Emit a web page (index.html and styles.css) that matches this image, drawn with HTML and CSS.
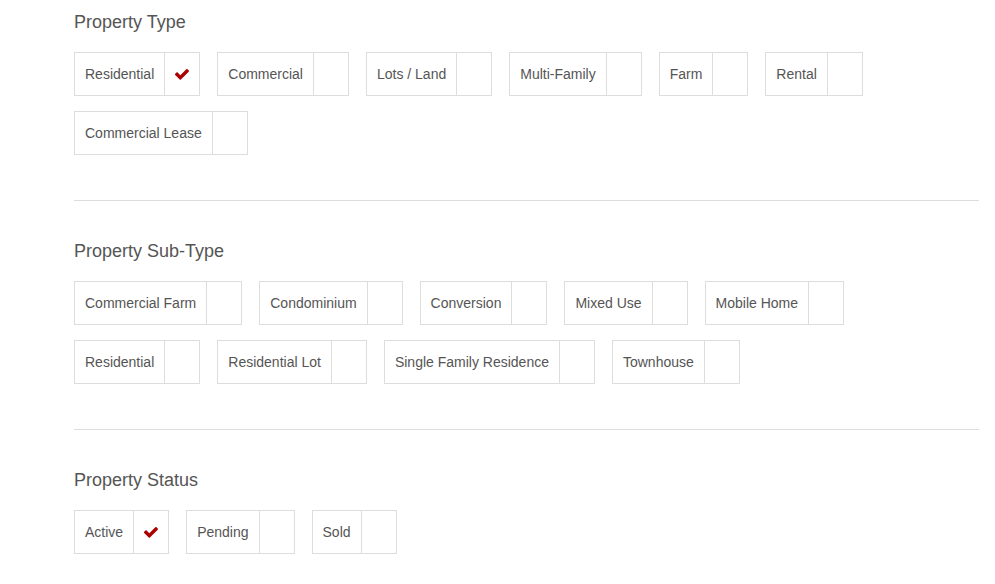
FILE: index.html
```html
<!DOCTYPE html>
<html>
<head>
    <title>Property Search</title>
    <link rel="stylesheet" href="styles.css">
</head>
<body>
    <div class="container">
        <div class="filter-group">
            <h3>Property Type</h3>
            <div class="options">
                <label class="option checked"><span class="option-text">Residential</span><span class="option-box"><svg viewBox="128 370 1543 1152"><path d="M1671 566q0 40-28 68l-724 724-136 136q-28 28-68 28t-68-28l-136-136-362-362q-28-28-28-68t28-68l136-136q28-28 68-28t68 28l294 295 656-657q28-28 68-28t68 28l136 136q28 28 28 68z"/></svg></span></label>
                <label class="option"><span class="option-text">Commercial</span><span class="option-box"></span></label>
                <label class="option"><span class="option-text">Lots / Land</span><span class="option-box"></span></label>
                <label class="option"><span class="option-text">Multi-Family</span><span class="option-box"></span></label>
                <label class="option"><span class="option-text">Farm</span><span class="option-box"></span></label>
                <label class="option"><span class="option-text">Rental</span><span class="option-box"></span></label>
                <label class="option"><span class="option-text">Commercial Lease</span><span class="option-box"></span></label>
            </div>
        </div>

        <hr>

        <div class="filter-group">
            <h3>Property Sub-Type</h3>
            <div class="options">
                <label class="option"><span class="option-text">Commercial Farm</span><span class="option-box"></span></label>
                <label class="option"><span class="option-text">Condominium</span><span class="option-box"></span></label>
                <label class="option"><span class="option-text">Conversion</span><span class="option-box"></span></label>
                <label class="option"><span class="option-text">Mixed Use</span><span class="option-box"></span></label>
                <label class="option"><span class="option-text">Mobile Home</span><span class="option-box"></span></label>
                <label class="option"><span class="option-text">Residential</span><span class="option-box"></span></label>
                <label class="option"><span class="option-text">Residential Lot</span><span class="option-box"></span></label>
                <label class="option"><span class="option-text">Single Family Residence</span><span class="option-box"></span></label>
                <label class="option"><span class="option-text">Townhouse</span><span class="option-box"></span></label>
            </div>
        </div>

        <hr>

        <div class="filter-group">
            <h3>Property Status</h3>
            <div class="options">
                <label class="option checked"><span class="option-text">Active</span><span class="option-box"><svg viewBox="128 370 1543 1152"><path d="M1671 566q0 40-28 68l-724 724-136 136q-28 28-68 28t-68-28l-136-136-362-362q-28-28-28-68t28-68l136-136q28-28 68-28t68 28l294 295 656-657q28-28 68-28t68 28l136 136q28 28 28 68z"/></svg></span></label>
                <label class="option"><span class="option-text">Pending</span><span class="option-box"></span></label>
                <label class="option"><span class="option-text">Sold</span><span class="option-box"></span></label>
            </div>
        </div>
    </div>
</body>
</html>
```

FILE: styles.css
```css
body {
    font-family: "Liberation Sans", Arial, sans-serif;
    margin: 0;
    padding: 0;
    background-color: #fff;
    color: #555;
}

.container {
    width: 905px;
    margin-left: 74px;
    padding-top: 12px;
}

.filter-group h3 {
    margin: 0 0 20px 0;
    font-size: 18px;
    line-height: 20px;
    font-weight: normal;
    color: #555;
}

.options {
    display: flex;
    flex-wrap: wrap;
    gap: 15px 17px;
}

.option {
    display: flex;
    height: 42px;
    border: 1px solid #ddd;
    font-size: 14px;
    line-height: 16px;
    color: #555;
    cursor: pointer;
}

.option-text {
    display: flex;
    align-items: center;
    padding: 0 10px;
}

.option-box {
    display: flex;
    align-items: center;
    justify-content: center;
    width: 34px;
    border-left: 1px solid #ddd;
}

.option-box svg {
    width: 14px;
    height: 11px;
    fill: #a00;
}

hr {
    border: none;
    border-top: 1px solid #ddd;
    margin: 45px 0 40px 0;
}
```
